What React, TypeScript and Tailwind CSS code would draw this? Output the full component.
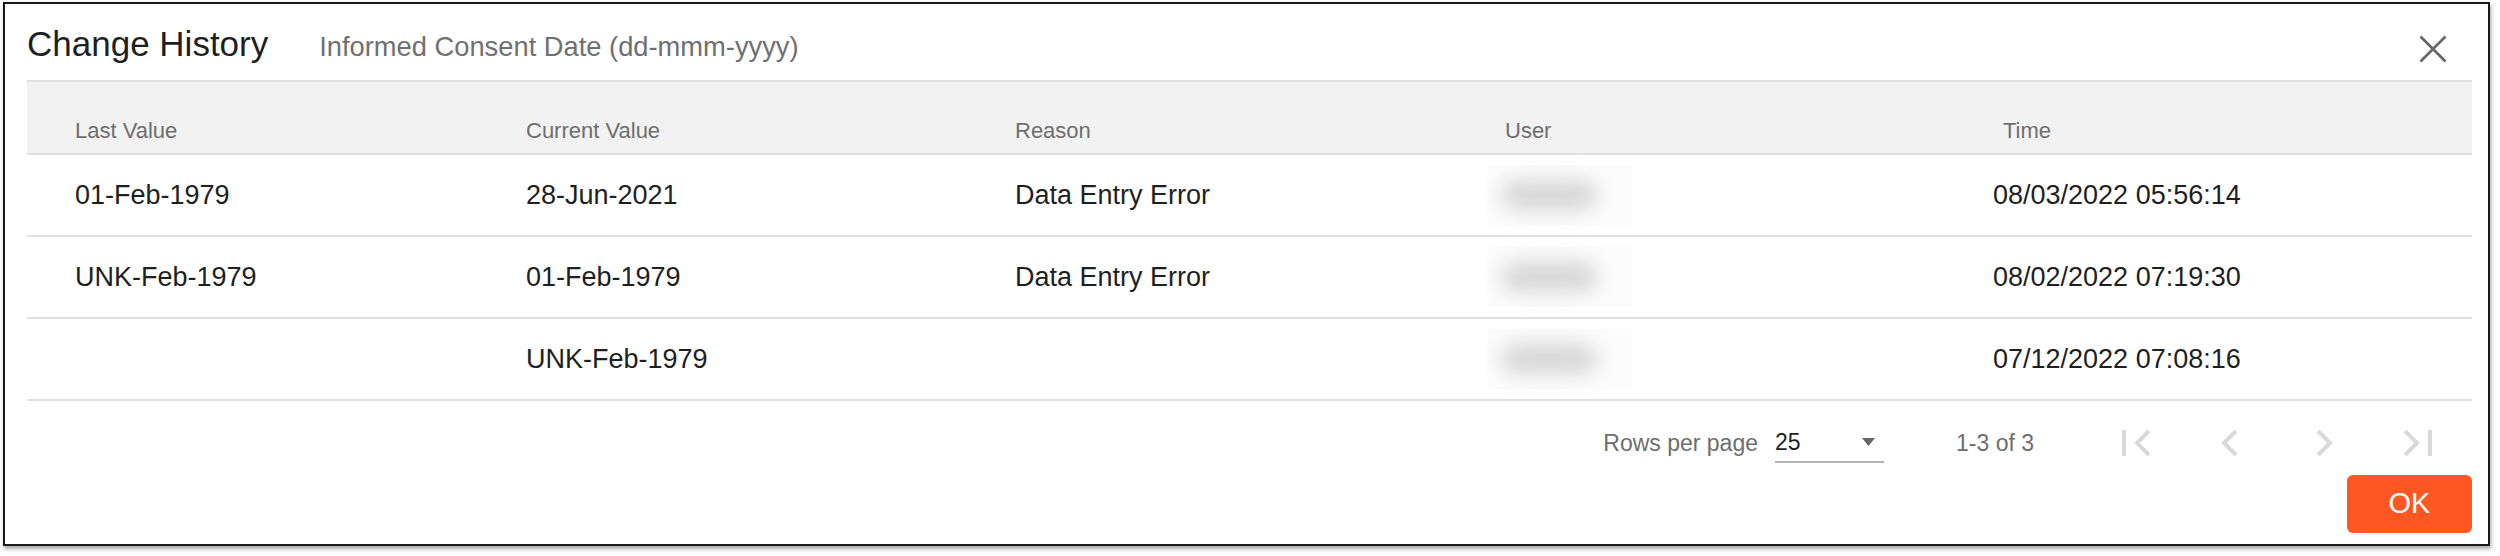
import React from 'react'

const rows = [
    { last: '01-Feb-1979', current: '28-Jun-2021', reason: 'Data Entry Error', time: '08/03/2022 05:56:14' },
    { last: 'UNK-Feb-1979', current: '01-Feb-1979', reason: 'Data Entry Error', time: '08/02/2022 07:19:30' },
    { last: '', current: 'UNK-Feb-1979', reason: '', time: '07/12/2022 07:08:16' },
]

const gridCols = 'grid grid-cols-[451px_489px_490px_488px_1fr]'

function NavIcon({ kind }: { kind: 'first' | 'prev' | 'next' | 'last' }) {
    return (
        <button className="w-[48px] h-[48px] flex items-center justify-center" disabled>
            <svg width="48" height="48" viewBox="0 0 48 48" fill="none" stroke="#d9d9d9" strokeWidth="4">
                {kind === 'first' && (
                    <>
                        <rect x="10" y="11" width="4" height="26" fill="#d9d9d9" stroke="none" />
                        <polyline points="37,12 25,24 37,36" />
                    </>
                )}
                {kind === 'prev' && <polyline points="30,12 18,24 30,36" />}
                {kind === 'next' && <polyline points="18,12 30,24 18,36" />}
                {kind === 'last' && (
                    <>
                        <polyline points="11,12 23,24 11,36" />
                        <rect x="34" y="11" width="4" height="26" fill="#d9d9d9" stroke="none" />
                    </>
                )}
            </svg>
        </button>
    )
}

function BlurredUser() {
    return (
        <div className="ml-[30px] w-[145px] h-[60px] bg-[#fcfcfc] flex items-center pl-[14px]">
            <div className="w-[96px] h-[30px] rounded-full bg-[#d6d6d6] blur-[10px]" />
        </div>
    )
}

export default function App() {
    return (
        <div className="w-[2500px] h-[556px] bg-white font-['Liberation_Sans',Arial,sans-serif]">
            <div className="ml-[3px] mt-[2px] w-[2487px] h-[544px] border-2 border-[#1a1a1a] bg-white shadow-[1px_3px_4px_rgba(0,0,0,0.35)] pl-[22px] pr-[16px] flex flex-col">

                {/* title bar */}
                <div className="h-[76px] flex items-start">
                    <div className="pt-[19px] flex items-baseline">
                        <h2 className="text-[35px] leading-[41px] text-[#1f1f1f]">Change History</h2>
                        <span className="ml-[51px] text-[27.3px] leading-[32px] text-[#707070]">Informed Consent Date (dd-mmm-yyyy)</span>
                    </div>
                    <button className="ml-auto mr-[25px] mt-[31px]">
                        <svg width="28" height="28" viewBox="0 0 28 28" stroke="#666" strokeWidth="2.6" fill="none">
                            <line x1="1.5" y1="1.5" x2="26.5" y2="26.5" />
                            <line x1="26.5" y1="1.5" x2="1.5" y2="26.5" />
                        </svg>
                    </button>
                </div>

                {/* table head */}
                <div className={`${gridCols} h-[75px] bg-[#f2f2f2] border-y-2 border-[#e0e0e0] items-end pb-[10px] text-[22px] leading-[25px] text-[#6e6e6e]`}>
                    <div className="pl-[48px]">Last Value</div>
                    <div className="pl-[48px]">Current Value</div>
                    <div className="pl-[48px]">Reason</div>
                    <div className="pl-[48px]">User</div>
                    <div className="pl-[58px]">Time</div>
                </div>

                {/* table body */}
                {rows.map((r, i) => (
                    <div key={i} className={`${gridCols} h-[82px] border-b-2 border-[#e0e0e0] items-center text-[27px] leading-[31px] text-[#1f1f1f]`}>
                        <div className="pl-[48px]">{r.last}</div>
                        <div className="pl-[48px]">{r.current}</div>
                        <div className="pl-[48px]">{r.reason}</div>
                        <div><BlurredUser /></div>
                        <div className="pl-[48px]">{r.time}</div>
                    </div>
                ))}

                {/* pagination */}
                <div className="mt-[14px] h-[56px] flex items-center justify-end pr-[30px] text-[23px] text-[#6e6e6e]">
                    <span>Rows per page</span>
                    <div className="ml-[17px] w-[109px] h-[40px] border-b-2 border-[#b5b5b5] flex items-center justify-between pr-[9px]">
                        <span className="text-[#1f1f1f]">25</span>
                        <svg width="13" height="8" viewBox="0 0 13 8"><polygon points="0,0 13,0 6.5,8" fill="#666" /></svg>
                    </div>
                    <span className="ml-[72px]">1-3 of 3</span>
                    <div className="ml-[78px] flex gap-[46px]">
                        <NavIcon kind="first" />
                        <NavIcon kind="prev" />
                        <NavIcon kind="next" />
                        <NavIcon kind="last" />
                    </div>
                </div>

                {/* actions */}
                <div className="mt-[4px] flex justify-end">
                    <button className="w-[125px] h-[58px] rounded-[6px] bg-[#ff5722] text-white text-[29px]">OK</button>
                </div>

            </div>
        </div>
    )
}
